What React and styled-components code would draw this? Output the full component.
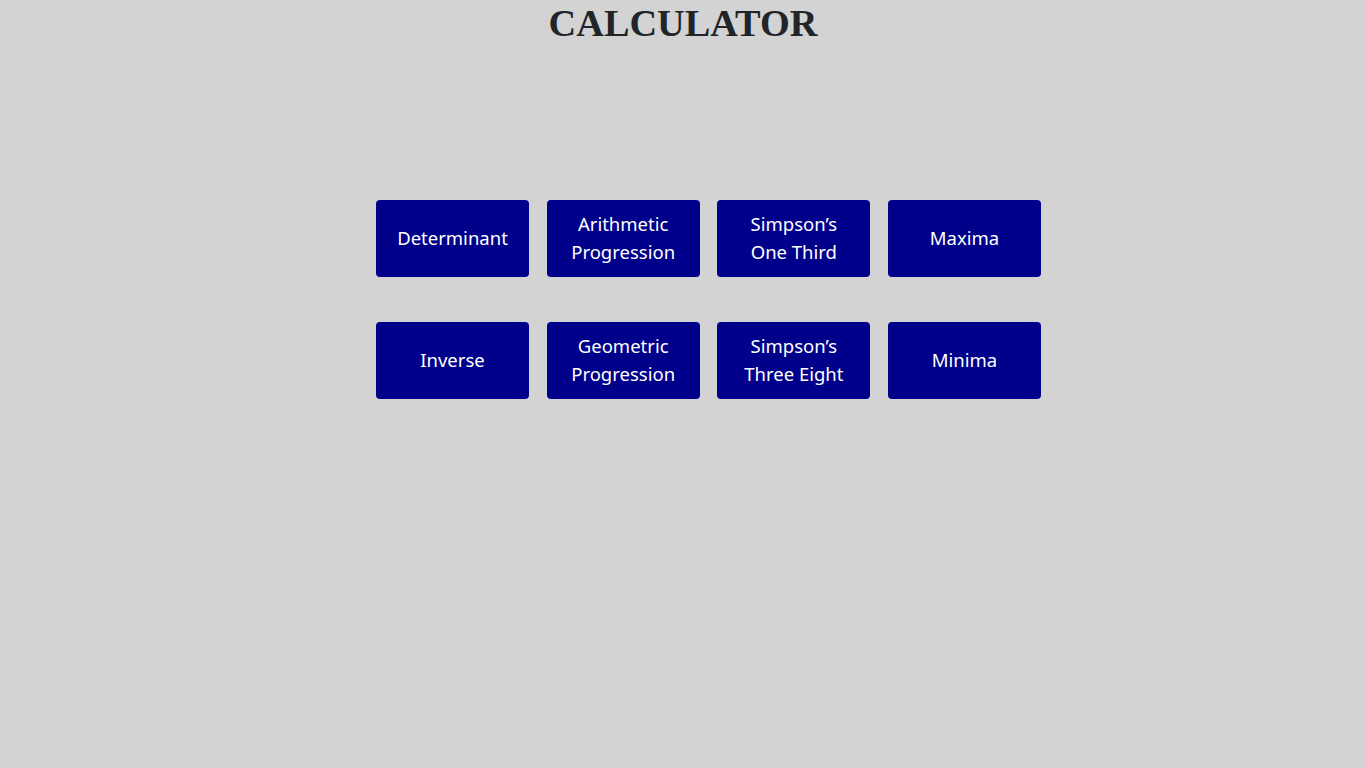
import React from 'react';
import styled, { createGlobalStyle } from 'styled-components';

const GlobalStyle = createGlobalStyle`
  body {
    margin: 0;
    background: #d3d3d3;
    font-family: "Noto Sans", sans-serif;
  }
`

const Page = styled.div`
  min-height: 768px;
  background: #d3d3d3;
`

const Title = styled.h1`
  margin: 0;
  font-family: "Liberation Serif", serif;
  font-weight: 700;
  font-size: 38.3px;
  line-height: 46px;
  color: #212529;
  text-align: center;
`

const Grid = styled.div`
  display: grid;
  grid-template-columns: repeat(4, 153px);
  column-gap: 17.7px;
  row-gap: 45.5px;
  justify-content: center;
  padding-left: 51px;
  margin-top: 154px;
`

const Button = styled.button`
  height: 76.5px;
  border: none;
  border-radius: 4px;
  background: #00008b;
  color: #fff;
  font-family: "Noto Sans", sans-serif;
  font-size: 18.5px;
  line-height: 28px;
  padding: 0 4px;
  display: flex;
  align-items: center;
  justify-content: center;
  text-align: center;
  cursor: pointer;
`

const items = [
  ['Determinant'],
  ['Arithmetic', 'Progression'],
  ['Simpson\u2019s', 'One Third'],
  ['Maxima'],
  ['Inverse'],
  ['Geometric', 'Progression'],
  ['Simpson\u2019s', 'Three Eight'],
  ['Minima'],
]

const App = () => {
  return (
    <Page>
      <GlobalStyle/>
      <Title>CALCULATOR</Title>
      <Grid>
        {items.map((lines, i) => (
          <Button key={i}>
            <span>
              {lines.map((l, j) => (
                <React.Fragment key={j}>
                  {j > 0 && <br/>}
                  {l}
                </React.Fragment>
              ))}
            </span>
          </Button>
        ))}
      </Grid>
    </Page>
  )
}

export default App
